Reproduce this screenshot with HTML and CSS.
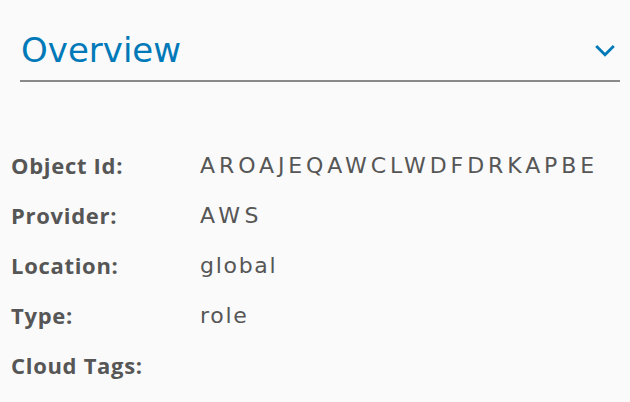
FILE: index.html
```html
<!DOCTYPE html>
<html>
<head>
<meta charset="utf-8">
<link rel="stylesheet" href="styles.css">
</head>
<body>
<div class="panel">
  <div class="header">
    <h2 class="title">Overview</h2>
    <svg class="chevron" width="20" height="14" viewBox="0 0 20 14"><path d="M1.2 2 L10 10.8 L18.8 2" fill="none" stroke="#0079b8" stroke-width="2.8"/></svg>
  </div>
  <dl class="props">
    <div class="row"><dt>Object Id:</dt><dd class="id-value">AROAJEQAWCLWDFDRKAPBE</dd></div>
    <div class="row"><dt>Provider:</dt><dd class="caps-value">AWS</dd></div>
    <div class="row"><dt>Location:</dt><dd>global</dd></div>
    <div class="row"><dt>Type:</dt><dd>role</dd></div>
    <div class="row"><dt>Cloud Tags:</dt><dd></dd></div>
  </dl>
</div>
</body>
</html>
```
FILE: styles.css
```css
html, body {
  margin: 0;
  padding: 0;
  background: #fafafa;
}
body {
  font-family: "Open Sans", "Noto Sans", sans-serif;
  color: #565656;
}
.panel {
  width: 630px;
  height: 402px;
  overflow: hidden;
}
.header {
  margin-left: 20px;
  width: 600px;
  height: 82px;
  box-sizing: border-box;
  border-bottom: 2px solid #8a8a8a;
  display: flex;
  align-items: flex-start;
  justify-content: space-between;
  padding-top: 33px;
}
.title {
  margin: 0 0 0 1px;
  font-family: "DejaVu Sans", sans-serif;
  font-size: 34px;
  line-height: 34px;
  font-weight: 400;
  color: #0079b8;
}
.chevron {
  margin-right: 5px;
  margin-top: 11px;
}
.props {
  margin: 58px 0 0 11px;
  padding: 0;
}
.row {
  display: flex;
  height: 50px;
  align-items: center;
  font-size: 22px;
}
dt {
  width: 189px;
  font-weight: 700;
  letter-spacing: 0.7px;
}
dd {
  margin: 0;
  font-family: "DejaVu Sans", sans-serif;
  letter-spacing: 1.7px;
}
.caps-value {
  letter-spacing: 4.5px;
}
.id-value {
  letter-spacing: 3.9px;
}
```
